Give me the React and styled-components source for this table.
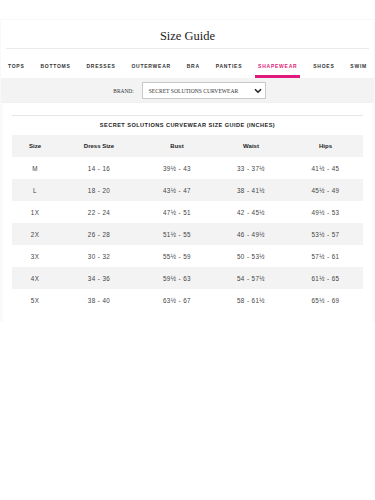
import React, { useState } from 'react';
import styled, { createGlobalStyle } from 'styled-components';

const GlobalStyle = createGlobalStyle`
  body {
    margin: 0;
    background: #ffffff;
    font-family: 'Liberation Sans', Arial, sans-serif;
    color: #333333;
  }
`;

const TABS = ['Tops', 'Bottoms', 'Dresses', 'Outerwear', 'Bra', 'Panties', 'Shapewear', 'Shoes', 'Swim'];

const HEAD = ['Size', 'Dress Size', 'Bust', 'Waist', 'Hips'];

const ROWS = [
  ['M', '14 - 16', '39½ - 43', '33 - 37½', '41½ - 45'],
  ['L', '18 - 20', '43½ - 47', '38 - 41½', '45½ - 49'],
  ['1X', '22 - 24', '47½ - 51', '42 - 45½', '49½ - 53'],
  ['2X', '26 - 28', '51½ - 55', '46 - 49½', '53½ - 57'],
  ['3X', '30 - 32', '55½ - 59', '50 - 53½', '57½ - 61'],
  ['4X', '34 - 36', '59½ - 63', '54 - 57½', '61½ - 65'],
  ['5X', '38 - 40', '63½ - 67', '58 - 61½', '65½ - 69'],
];

const App = () => {
  const [active, setActive] = useState('Shapewear');

  return (
    <Page>
      <GlobalStyle />
      <Card>
        <Title>Size Guide</Title>
        <Tabs>
          {TABS.map((t) => (
            <Tab key={t} $active={t === active} onClick={() => setActive(t)}>
              {t}
            </Tab>
          ))}
        </Tabs>
        <BrandBar>
          <BrandLabel>BRAND:</BrandLabel>
          <Select>
            <span>SECRET SOLUTIONS CURVEWEAR</span>
            <svg width="8" height="6" viewBox="0 0 8 6" fill="none">
              <path d="M1 1.2L4 4.2L7 1.2" stroke="#222" strokeWidth="1.6" />
            </svg>
          </Select>
        </BrandBar>
        <Panel>
          <TableTitle>Secret Solutions Curvewear Size Guide (Inches)</TableTitle>
          <Row $shaded $head>
            {HEAD.map((h) => (
              <Cell key={h}>{h}</Cell>
            ))}
          </Row>
          {ROWS.map((r, i) => (
            <Row key={r[0]} $shaded={i % 2 === 1}>
              {r.map((c, j) => (
                <Cell key={j}>{c}</Cell>
              ))}
            </Row>
          ))}
        </Panel>
      </Card>
    </Page>
  );
};

const Page = styled.div`
  padding-top: 20px;
`;

const Card = styled.div`
  margin: 0 1px;
  background: #fff;
  box-shadow: 0 0 2px rgba(0, 0, 0, 0.08);
`;

const Title = styled.h1`
  margin: 0 5px;
  padding: 5px 0 1px;
  font-family: 'Liberation Serif', 'Times New Roman', serif;
  font-weight: 400;
  font-size: 12.5px;
  line-height: 22px;
  color: #222;
  text-align: center;
  border-bottom: 1px solid #ebebeb;
`;

const Tabs = styled.nav`
  display: flex;
  justify-content: space-between;
  padding: 0 4px;
`;

const Tab = styled.div`
  padding: 13px 3px 5px;
  font-size: 5px;
  line-height: 8px;
  font-weight: 700;
  letter-spacing: 0.75px;
  text-transform: uppercase;
  color: ${(p) => (p.$active ? '#e0197d' : '#333')};
  border-bottom: 3px solid ${(p) => (p.$active ? '#e0197d' : 'transparent')};
  cursor: pointer;
`;

const BrandBar = styled.div`
  height: 25px;
  background: #f3f3f3;
  display: flex;
  align-items: center;
  justify-content: center;
  gap: 8px;
  padding-left: 4px;
`;

const BrandLabel = styled.span`
  font-family: 'Liberation Serif', 'Times New Roman', serif;
  font-size: 5.4px;
  color: #333;
`;

const Select = styled.div`
  box-sizing: border-box;
  width: 124px;
  height: 17px;
  background: #fff;
  border: 1px solid #c9c9c9;
  display: flex;
  align-items: center;
  justify-content: space-between;
  padding: 0 3px 0 6px;
  font-family: 'Liberation Serif', 'Times New Roman', serif;
  font-size: 5.6px;
  color: #333;
`;

const Panel = styled.div`
  margin: 0 2px;
  padding: 12px 9px 11px;
  background: #fff;
  box-shadow: 0 1px 3px rgba(0, 0, 0, 0.07);
`;

const TableTitle = styled.div`
  border-top: 1px solid #e6e6e6;
  height: 19px;
  line-height: 19px;
  text-align: center;
  font-size: 5.6px;
  font-weight: 700;
  letter-spacing: 0.45px;
  text-transform: uppercase;
  color: #222;
`;

const Row = styled.div`
  display: grid;
  grid-template-columns: 46px 82px 74px 74px 1fr;
  height: 22px;
  align-items: center;
  background: ${(p) => (p.$shaded ? '#f3f3f3' : '#fff')};
  font-size: ${(p) => (p.$head ? '6px' : '6.3px')};
  font-weight: ${(p) => (p.$head ? 700 : 400)};
  letter-spacing: ${(p) => (p.$head ? '0' : '0.4px')};
  color: ${(p) => (p.$head ? '#222' : '#444')};
`;

const Cell = styled.div`
  text-align: center;
`;

export default App;
